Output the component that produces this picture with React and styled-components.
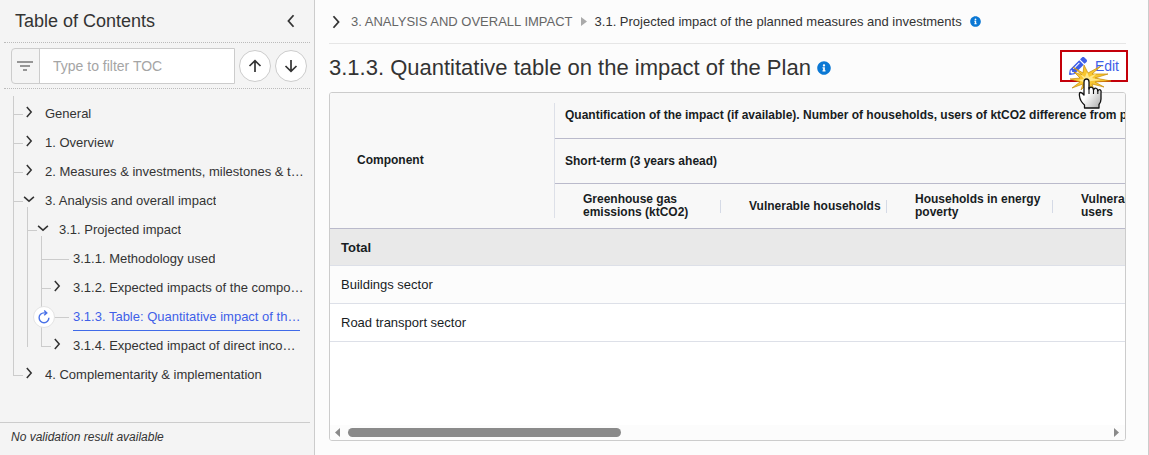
import React from "react";
import styled, { createGlobalStyle, css } from "styled-components";
import { FaInfoCircle, FaPencilAlt } from "react-icons/fa";

const tree = [
    { label: "General", level: 0, toggle: "closed" },
    { label: "1. Overview", level: 0, toggle: "closed" },
    { label: "2. Measures & investments, milestones & t…", level: 0, toggle: "closed" },
    { label: "3. Analysis and overall impact", level: 0, toggle: "open" },
    { label: "3.1. Projected impact", level: 1, toggle: "open" },
    { label: "3.1.1. Methodology used", level: 2 },
    { label: "3.1.2. Expected impacts of the compo…", level: 2, toggle: "closed" },
    { label: "3.1.3. Table: Quantitative impact of th…", level: 2, active: true },
    { label: "3.1.4. Expected impact of direct inco…", level: 2, toggle: "closed", last: true },
    { label: "4. Complementarity & implementation", level: 0, toggle: "closed", last: true },
];

const columns = [
    "Greenhouse gas emissions (ktCO2)",
    "Vulnerable households",
    "Households in energy poverty",
    "Vulnerable transport users",
];

const rows = [
    { name: "Total", total: true },
    { name: "Buildings sector" },
    { name: "Road transport sector" },
];

const Chevron = ({ direction, size = 10 }) => {
    const points = {
        left: "7.500,1 3.500,5.500 7.500,10",
        right: "3.500,1 7.500,5.500 3.500,10",
        down: "1,3.500 5.500,7.500 10,3.500",
    };
    return (
        <svg width={size} height={size} viewBox="0 0 11 11" aria-hidden="true">
            <polyline points={points[direction]} fill="none" stroke="currentColor" strokeWidth="1.4" />
        </svg>
    );
};

const Arrow = ({ down }) => (
    <svg width="14" height="14" viewBox="0 0 14 14" aria-hidden="true">
        <path
            d={down ? "M7 1v11M1.500 7 7 12.300 12.500 7" : "M7 13V2M1.500 7 7 1.700 12.500 7"}
            fill="none"
            stroke="currentColor"
            strokeWidth="1.7"
        />
    </svg>
);

const TreeItem = ({ item }) => {
    const { level, toggle, active, last, label } = item;
    return (
        <TreeRow>
            {Array.from({ length: level }, (_, i) => (
                <Guide key={i} $half={last && level === 2 && i === 1} />
            ))}
            <Guide $half={last} $branch={true} />
            <ToggleCell $open={toggle === "open"} $leaf={!toggle}>
                {toggle && (
                    <ToggleButton aria-label={toggle === "open" ? "Collapse" : "Expand"}>
                        <Chevron direction={toggle === "open" ? "down" : "right"} size={12} />
                    </ToggleButton>
                )}
            </ToggleCell>
            {active && (
                <RefreshButton aria-label="Refresh">
                    <svg width="14" height="14" viewBox="0 0 14 14" aria-hidden="true">
                        <path d="M9.500 2.900H7A4.900 4.900 0 1 0 11.900 7.800M7.200 0.500 9.800 2.900 7.200 5.300" fill="none" stroke="currentColor" strokeWidth="1.4" />
                    </svg>
                </RefreshButton>
            )}
            <TreeLink href="#" $active={active}>{label}</TreeLink>
        </TreeRow>
    );
};

const ClickPointer = () => (
    <PointerDrawing width="42" height="46" viewBox="0 0 42 46" aria-hidden="true">
        <defs>
            <linearGradient id="hand" x1="0" y1="0" x2="1" y2="1">
                <stop offset="0.45" stopColor="#fff" />
                <stop offset="1" stopColor="#aaa" />
            </linearGradient>
        </defs>
        <path
            d="M3 4 13 10 14 2 18 10 31 3 22 11 38 11 25 15 41 18 25 19 34 24 22 21 24 27 17 21 11 27 13 21 2 25 10 19 0 16 10 15 4 9 12 12Z"
            fill="#f8c630"
            stroke="#c48a0a"
            strokeWidth="0.7"
        />
        <path d="M10 11 15 14 17 9 19 14 27 10 22 15 31 17 21 18 16 20 8 17 14 16Z" fill="#ffe88a" />
        <path
            d="M14 32V19Q14 16 16.500 16T19 19V26Q20 23.500 22 24.300 23.500 25 23.500 27 24.500 24.500 26.500 25.500 27.800 26 27.800 28 29 26 30.500 27 31.500 28 31 30V36Q31 39 29 41.500V45H14.500V42Q10 38 9.500 33 9 29.500 10.500 29.500T14 32Z"
            fill="url(#hand)"
            stroke="#111"
            strokeWidth="1.3"
            strokeLinejoin="round"
        />
        <path d="M19 24V31M23.500 26V31M27.800 27V31" fill="none" stroke="#111" strokeWidth="1.1" />
    </PointerDrawing>
);

const App = () => {
    return (
        <Page>
            <GlobalStyle />
            <Sidebar>
                <SidebarHeader>
                    <SidebarTitle>Table of Contents</SidebarTitle>
                    <PlainButton aria-label="Hide table of contents">
                        <Chevron direction="left" size={14} />
                    </PlainButton>
                </SidebarHeader>
                <FilterBar>
                    <FilterField>
                        <svg width="16" height="10" viewBox="0 0 16 10" aria-hidden="true">
                            <path d="M0 1H16M3 5H13M6 9H10" stroke="#777" strokeWidth="1.5" />
                        </svg>
                        <FilterInput placeholder="Type to filter TOC" aria-label="Type to filter TOC" />
                    </FilterField>
                    <RoundButton aria-label="Previous"><Arrow /></RoundButton>
                    <RoundButton aria-label="Next"><Arrow down /></RoundButton>
                </FilterBar>
                <Tree>
                    {tree.map((item) => <TreeItem key={item.label} item={item} />)}
                </Tree>
                <ValidationNote>No validation result available</ValidationNote>
            </Sidebar>

            <Main>
                <Breadcrumb aria-label="Breadcrumb">
                    <PlainButton aria-label="Show sections">
                        <Chevron direction="right" size={14} />
                    </PlainButton>
                    <Crumb href="#">3. ANALYSIS AND OVERALL IMPACT</Crumb>
                    <svg width="6" height="9" viewBox="0 0 6 9" aria-hidden="true">
                        <path d="M0 0 6 4.500 0 9Z" fill="#aaa" />
                    </svg>
                    <Crumb href="#" $current>3.1. Projected impact of the planned measures and investments</Crumb>
                    <FaInfoCircle size={11} color="#0b78d4" />
                </Breadcrumb>

                <TitleRow>
                    <Title>3.1.3. Quantitative table on the impact of the Plan</Title>
                    <FaInfoCircle size={14} color="#0b78d4" />
                    <EditButton>
                        <FaPencilAlt size={18} />
                        Edit
                        <ClickPointer />
                    </EditButton>
                </TitleRow>

                <TablePanel>
                    <TableViewport>
                        <Table>
                            <colgroup>
                                <NameCol />
                                {columns.map((column) => <ValueCol key={column} />)}
                            </colgroup>
                            <thead>
                                <HeadRow $first>
                                    <HeadCell rowSpan="3"><NameHeading>Component</NameHeading></HeadCell>
                                    <HeadCell colSpan="4" $group>
                                        Quantification of the impact (if available). Number of households, users of ktCO2 difference from policies
                                    </HeadCell>
                                </HeadRow>
                                <HeadRow>
                                    <HeadCell colSpan="4" $group>Short-term (3 years ahead)</HeadCell>
                                </HeadRow>
                                <HeadRow>
                                    {columns.map((column) => (
                                        <HeadCell key={column}><ColumnHeading>{column}</ColumnHeading></HeadCell>
                                    ))}
                                </HeadRow>
                            </thead>
                            <tbody>
                                {rows.map((row) => (
                                    <BodyRow key={row.name} $total={row.total}>
                                        <BodyCell>{row.name}</BodyCell>
                                        {columns.map((column) => <BodyCell key={column} />)}
                                    </BodyRow>
                                ))}
                            </tbody>
                        </Table>
                    </TableViewport>
                    <ScrollBar>
                        <svg width="5" height="9" viewBox="0 0 5 9" aria-hidden="true">
                            <path d="M5 0 0 4.500 5 9Z" fill="#8a8a8a" />
                        </svg>
                        <ScrollTrack><ScrollThumb /></ScrollTrack>
                        <svg width="5" height="9" viewBox="0 0 5 9" aria-hidden="true">
                            <path d="M0 0 5 4.500 0 9Z" fill="#8a8a8a" />
                        </svg>
                    </ScrollBar>
                </TablePanel>
            </Main>
        </Page>
    );
};

export default App;

const GlobalStyle = createGlobalStyle`
    * {
        box-sizing: border-box;
    }
    body {
        margin: 0;
        color: #333;
        background-color: #fcfcfc;
        font-family: "Liberation Sans", Arial, sans-serif;
        font-size: 13px;
    }
    button, input {
        font-family: inherit;
        color: inherit;
    }
    svg {
        flex: none;
    }
`;

const Page = styled.div`
    display: flex;
    min-height: 100vh;
`;

const Sidebar = styled.aside`
    display: flex;
    flex-direction: column;
    flex: none;
    width: 315px;
    padding-right: 4px;
    background-color: #f4f4f4;
    border-right: 1px solid #ccc;
`;

const SidebarHeader = styled.header`
    display: flex;
    align-items: center;
    justify-content: space-between;
    height: 43px;
    margin-left: 4px;
    padding: 0 12px 0 11px;
    border-bottom: 1px dotted #bbb;
`;

const SidebarTitle = styled.h2`
    margin: 0;
    font-size: 18px;
    font-weight: normal;
`;

const PlainButton = styled.button`
    display: flex;
    padding: 0;
    border: 0;
    background: none;
`;

const FilterBar = styled.div`
    display: flex;
    align-items: center;
    gap: 4px;
    height: 46px;
    margin-left: 4px;
    padding: 0 3px 0 7px;
    border-bottom: 1px dotted #bbb;
`;

const FilterField = styled.div`
    display: flex;
    align-items: center;
    flex: 1;
    min-width: 0;
    height: 36px;
    padding-left: 5px;
    gap: 6px;
    border: 1px solid #ccc;
    border-radius: 4px 0 0 4px;
`;

const FilterInput = styled.input`
    flex: 1;
    min-width: 0;
    height: 34px;
    padding: 0 13px;
    border: 0;
    border-left: 1px solid #ccc;
    background-color: #fff;
    font-size: 14px;

    &::placeholder {
        color: #a5a5a5;
    }
`;

const RoundButton = styled.button`
    display: flex;
    align-items: center;
    justify-content: center;
    width: 32px;
    height: 32px;
    padding: 0;
    border: 1px solid #ccc;
    border-radius: 50%;
    background-color: #fff;
`;

const Tree = styled.ul`
    flex: 1;
    margin: 0;
    padding: 7px 4px 0 13px;
    list-style: none;

    &::before {
        content: "";
        display: block;
        height: 3px;
        border-left: 1px solid #ccc;
    }
`;

const TreeRow = styled.li`
    display: flex;
    position: relative;
    height: 29px;
`;

const line = "linear-gradient(#ccc, #ccc)";

const Guide = styled.span`
    flex: none;
    width: 14px;
    background-image: ${line}, ${line};
    background-repeat: no-repeat;
    background-position: 0 0, 0 15px;
    background-size: 1px ${(props) => (props.$half ? "16px" : "100%")}, ${(props) => (props.$branch ? "10px 1px" : "0 0")};

    ${(props) => props.$branch && css`
        width: 10px;
    `}
`;

const ToggleCell = styled.span`
    display: flex;
    flex: none;
    width: 22px;
    background-image: ${line};
    background-repeat: no-repeat;
    background-position: ${(props) => (props.$leaf ? "0 15px" : "4px 21px")};
    background-size: ${(props) => (props.$leaf ? "18px 1px" : props.$open ? "1px 8px" : "0 0")};
`;

const ToggleButton = styled.button`
    display: flex;
    height: 26px;
    align-items: center;
    padding: 0;
    border: 0;
    background: none;
`;

const TreeLink = styled.a`
    align-self: flex-end;
    height: 27px;
    overflow: hidden;
    line-height: 25px;
    white-space: nowrap;
    text-overflow: ellipsis;
    text-decoration: none;
    color: ${(props) => (props.$active ? "#3f5fe8" : "#333")};
    border-bottom: 1px solid ${(props) => (props.$active ? "#3f6ae8" : "transparent")};
`;

const RefreshButton = styled.button`
    display: flex;
    position: absolute;
    top: 4px;
    left: 20px;
    width: 22px;
    height: 22px;
    align-items: center;
    justify-content: center;
    padding: 0;
    border: 1px solid #e4e4e4;
    border-radius: 50%;
    background-color: #fff;
    color: #4a72e8;
`;

const ValidationNote = styled.footer`
    padding: 0 11px;
    border-top: 1px solid #ccc;
    font-size: 12px;
    font-style: italic;
    line-height: 28px;
    height: 33px;
`;

const Main = styled.main`
    display: flex;
    flex-direction: column;
    flex: 1;
    min-width: 0;
    padding: 0 22px 14px 14px;
    border-right: 1px solid #ccc;
`;

const Breadcrumb = styled.nav`
    display: flex;
    align-items: center;
    gap: 8px;
    height: 44px;
    border-bottom: 1px solid #e6e6e6;
`;

const Crumb = styled.a`
    color: ${(props) => (props.$current ? "#333" : "#666")};
    font-size: 13px;
    text-decoration: none;
    white-space: nowrap;
`;

const TitleRow = styled.div`
    display: flex;
    align-items: center;
    gap: 6px;
    height: 48px;
`;

const Title = styled.h1`
    margin: 0;
    font-size: 22px;
    font-weight: normal;
    white-space: nowrap;
`;

const EditButton = styled.button`
    display: flex;
    position: relative;
    align-items: center;
    align-self: flex-start;
    gap: 8px;
    height: 28px;
    margin-top: 8px;
    margin-left: auto;
    padding: 0 7px;
    border: 0;
    outline: 2px solid #c4000a;
    background-color: #fff;
    color: #3f5fe8;
    font-size: 14px;
`;

const PointerDrawing = styled.svg`
    position: absolute;
    top: 11px;
    left: 8px;
`;

const TablePanel = styled.section`
    display: flex;
    flex-direction: column;
    flex: 1;
    overflow: hidden;
    border: 1px solid #ccc;
    border-radius: 3px;
    background-color: #fff;
`;

const TableViewport = styled.div`
    flex: 1;
    overflow: hidden;
`;

const Table = styled.table`
    width: 889px;
    min-width: 100%;
    table-layout: fixed;
    border-collapse: separate;
    border-spacing: 0;
    color: #181d1f;
`;

const NameCol = styled.col`
    width: 225px;
`;

const ValueCol = styled.col`
    width: 166px;
`;

const HeadRow = styled.tr`
    height: ${(props) => (props.$first ? "46px" : "45px")};
`;

const HeadCell = styled.th`
    padding: ${(props) => (props.$group ? "0 10px" : "0")};
    background-color: #f8f8f8;
    border-bottom: 1px solid #babacb;
    font-size: 12px;
    line-height: 13px;
    text-align: left;
    white-space: ${(props) => (props.$group ? "nowrap" : "normal")};
`;

const NameHeading = styled.div`
    display: flex;
    align-items: center;
    height: 115px;
    padding-left: 27px;
    border-right: 1px solid #dde0e8;
`;

const ColumnHeading = styled.div`
    display: flex;
    align-items: center;
    justify-content: space-between;
    padding-left: 28px;

    &::after {
        content: "";
        flex: none;
        width: 1px;
        height: 13px;
        background-color: #d5dae6;
    }
`;

const BodyRow = styled.tr`
    height: ${(props) => (props.$total ? "37px" : "38px")};
    background-color: ${(props) => (props.$total ? "#e9e9e9" : "#fff")};
    font-weight: ${(props) => (props.$total ? "bold" : "normal")};

    &:nth-child(2) {
        background-color: #fcfcfc;
    }
`;

const BodyCell = styled.td`
    padding: 0 11px;
    border-bottom: 1px solid #dde0e8;
    font-size: 13px;
`;

const ScrollBar = styled.div`
    display: flex;
    align-items: center;
    gap: 8px;
    height: 15px;
    padding: 0 6px 0 5px;
    background-color: #fcfcfc;
`;

const ScrollTrack = styled.div`
    flex: 1;
`;

const ScrollThumb = styled.div`
    width: 36%;
    height: 9px;
    border-radius: 5px;
    background-color: #8a8a8a;
`;
